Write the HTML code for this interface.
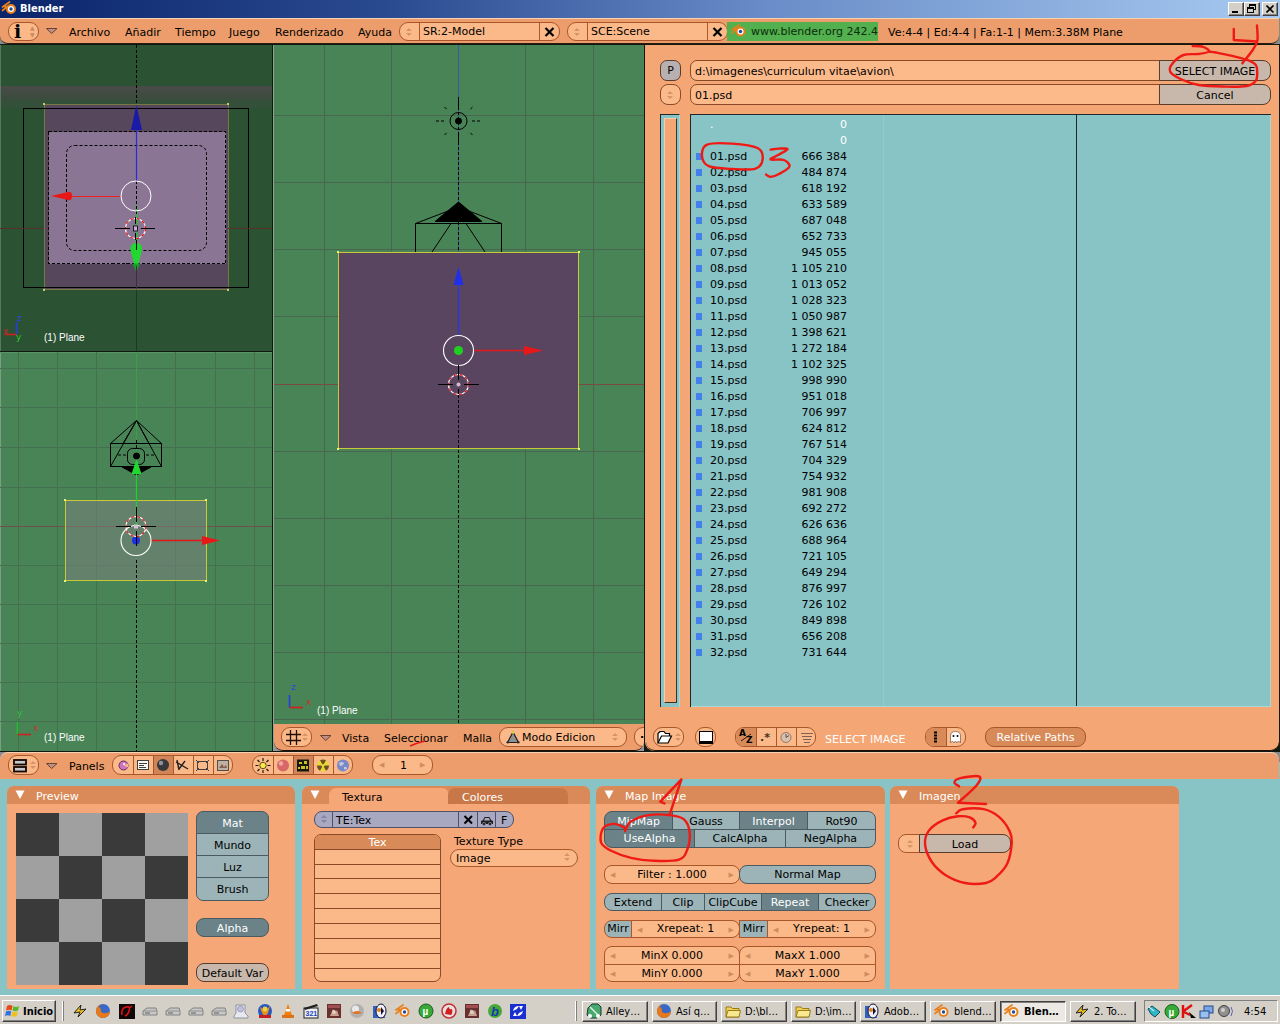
<!DOCTYPE html>
<html><head><meta charset="utf-8"><title>Blender</title>
<style>
*{box-sizing:border-box;margin:0;padding:0}
html,body{width:1280px;height:1024px;overflow:hidden;background:#88c3c6}
body{position:relative;font-family:"DejaVu Sans","Liberation Sans",sans-serif;font-size:11px;color:#000;line-height:13px}
.a{position:absolute}
.t{position:absolute;white-space:nowrap}
.w{color:#fff}
/* title bar */
#title{left:0;top:0;width:1280px;height:18px;background:linear-gradient(90deg,#0a246a 0%,#2a4a90 30%,#6a8cc8 60%,#a6caf0 100%)}
#title .t{left:20px;top:2px;color:#fff;font-weight:bold;font-size:11px;font-family:'DejaVu Sans Condensed','DejaVu Sans',sans-serif}
.wb{position:absolute;top:2px;width:16px;height:14px;background:#d4d0c8;border:1px solid;border-color:#fff #404040 #404040 #fff;box-shadow:inset -1px -1px 0 #808080}
/* header */
#hdr{left:0;top:18px;width:1279px;height:26px;background:#ec9d6b;border-top:1px solid #f8d0b4;border-bottom:1px solid #2a1a10;border-radius:0 0 8px 8px}
.pill{position:absolute;height:19px;border:1px solid #a8562a;border-radius:9px;background:#fbb888}
.sep{position:absolute;top:0;width:1px;height:17px;background:#a8562a}
.ud{color:#d89466;width:7px;height:9px;font-size:0;top:5px!important;margin-left:-1px}
.ud::before{content:"";position:absolute;left:0;top:0;border:3.5px solid transparent;border-top:0;border-bottom:3px solid currentColor}
.ud::after{content:"";position:absolute;left:0;top:5px;border:3.5px solid transparent;border-bottom:0;border-top:3px solid currentColor}
.x{font-size:15px;line-height:17px;font-weight:bold}
.vt{font-family:"Liberation Sans",sans-serif;font-size:10px}
/* viewports */
.vp{position:absolute;overflow:hidden}
/* file browser */
#fb{left:646px;top:45px;width:633px;height:706px;background:#f4a674;border-radius:0 0 9px 9px;border-bottom:1px solid #201008;box-shadow:-1px 0 0 #f4a674}
.fld{position:absolute;height:19px;background:#fcb98a;border:1px solid #8a4a28}
.gbtn{position:absolute;height:19px;background:#c8b8ac;border:1px solid #5a3c2c;text-align:center;line-height:17px}
.r{position:absolute;left:0;width:200px;height:16px;line-height:16px;white-space:pre;margin-top:-1px}
.r i{position:absolute;left:5px;top:4px;width:6px;height:7px;background:#4480ec}
.r .nm{position:absolute;left:19px;top:0}
.r .sz{position:absolute;right:44px;top:0}
/* buttons window */
#bh{left:0;top:752px;width:1279px;height:27px;background:#ec9d6b;border-top:1px solid #f8d0b4;border-radius:8px 8px 0 0}
.panel{position:absolute;background:#f5a777;border-radius:7px 7px 0 0}
.ph{position:absolute;left:0;top:0;right:0;height:18px;background:#da8a58;border-radius:7px 7px 0 0;color:#fff}
.b{position:absolute;height:17px;line-height:15px;text-align:center;border:1px solid #4a5a60;background:#9cb4b8;white-space:nowrap}
.b.on{background:#6a8288;color:#fff}
.n{position:absolute;height:17px;line-height:15px;text-align:center;border:1px solid #a8562a;background:#fbb888;white-space:nowrap}
.ar{font-size:7px;line-height:18px;top:0;color:#d08c60}
.panel .b,.panel .n,.panel .gbtn{padding-top:1px}
/* taskbar */
#tb{left:0;top:995px;width:1280px;height:29px;background:#d4d0c8;border-top:1px solid #fff}
.tk{position:absolute;top:5px;height:21px;border:1px solid;border-color:#fff #404040 #404040 #fff;box-shadow:inset -1px -1px 0 #808080;font-family:"DejaVu Sans Condensed","DejaVu Sans",sans-serif;font-size:11px;line-height:20px;padding-left:23px;white-space:nowrap;overflow:hidden}
</style></head><body>

<!-- TITLE BAR -->
<div id="title" class="a"><svg class="a" style="left:1px;top:0" width="17" height="16" viewBox="0 0 16 16"><path d="M1 7 L8 2 M1 10.500 L6 6.500 L2.500 6.500" stroke="#e8801c" stroke-width="1.700" fill="none" stroke-linecap="round"/><circle cx="9.500" cy="9" r="5" fill="#e8801c"/><circle cx="9.500" cy="9" r="3" fill="#fff"/><circle cx="9.500" cy="9" r="1.700" fill="#1c4c9c"/></svg><span class="t">Blender</span>
<div class="wb" style="left:1228px"><div class="a" style="left:3px;top:8px;width:6px;height:2px;background:#000"></div></div>
<div class="wb" style="left:1244px"><div class="a" style="left:4px;top:1px;width:7px;height:6px;border:1px solid #000;border-top-width:2px"></div><div class="a" style="left:2px;top:4px;width:7px;height:6px;border:1px solid #000;border-top-width:2px;background:#d4d0c8"></div></div>
<div class="wb" style="left:1262px"><svg class="a" style="left:3px;top:2px" width="9" height="8"><path d="M0.500 0.500 L7.500 7.500 M7.500 0.500 L0.500 7.500" stroke="#000" stroke-width="1.600"/></svg></div>
</div>

<!-- MAIN HEADER -->
<div class="a" style="left:0;top:18px;width:1280px;height:27px;background:#8a8a88"></div>
<div id="hdr" class="a">
<div class="pill" style="left:8px;top:3px;width:31px"><span class="t" style="left:5px;top:-1px;font-family:'DejaVu Serif','Liberation Serif',serif;font-weight:bold;font-size:19px;line-height:19px;top:-1px!important">i</span><span class="t" style="left:21px;top:1px;font-size:6px;line-height:7px;color:#c88a60">▲<br>▼</span></div>
<svg class="a" style="left:45px;top:8px" width="14" height="8"><path d="M1.5 1.5 L12 1.5 L6.7 6.5 Z" fill="#c09080" stroke="#6a4030" stroke-width="1"/></svg>
<span class="t" style="left:69px;top:7px">Archivo</span>
<span class="t" style="left:125px;top:7px">Añadir</span>
<span class="t" style="left:175px;top:7px">Tiempo</span>
<span class="t" style="left:229px;top:7px">Juego</span>
<span class="t" style="left:275px;top:7px">Renderizado</span>
<span class="t" style="left:358px;top:7px">Ayuda</span>
<div class="pill" style="left:399px;top:3px;width:161px"><span class="t ud" style="left:7px;top:2px"></span><div class="sep" style="left:19px"></div><span class="t" style="left:23px;top:2px">SR:2-Model</span><div class="sep" style="left:139px"></div><svg class="a" style="left:144px;top:4px" width="11" height="10"><path d="M1.500 1 L9.500 9 M9.500 1 L1.500 9" stroke="#000" stroke-width="2.200"/></svg></div>
<div class="pill" style="left:567px;top:3px;width:161px"><span class="t ud" style="left:7px;top:2px"></span><div class="sep" style="left:19px"></div><span class="t" style="left:23px;top:2px">SCE:Scene</span><div class="sep" style="left:139px"></div><svg class="a" style="left:144px;top:4px" width="11" height="10"><path d="M1.500 1 L9.500 9 M9.500 1 L1.500 9" stroke="#000" stroke-width="2.200"/></svg></div>
<div class="a" style="left:727px;top:3px;width:151px;height:19px;background:#52b04e"><span class="t" style="left:24px;top:3px;color:#0c2c0c">www.blender.org 242.4</span>
<svg class="a" style="left:4px;top:2px" width="16" height="14" viewBox="0 0 16 14"><path d="M1 6 L8 1 M1 9 L6 5 L3 5" stroke="#e8801c" stroke-width="1.6" fill="none" stroke-linecap="round"/><circle cx="9.5" cy="7.5" r="5" fill="#e8801c"/><circle cx="9.5" cy="7.5" r="3" fill="#fff"/><circle cx="9.5" cy="7.5" r="1.7" fill="#1c4c9c"/></svg></div>
<span class="t" style="left:888px;top:7px">Ve:4-4 | Ed:4-4 | Fa:1-1 | Mem:3.38M Plane</span>
</div>

<!-- VIEWPORTS -->
<div class="a" style="left:0;top:44px;width:1280px;height:708px;background:#101810"></div>
<div class="a" style="left:273px;top:45px;width:1px;height:706px;background:#88a890"></div>
<div class="vp" id="v1" style="left:0;top:45px;width:272px;height:306px;background:#2c5234">
<svg class="a" style="left:0;top:0" width="272" height="306" viewBox="0 45 272 306" shape-rendering="crispEdges">
<defs><linearGradient id="hz" x1="0" y1="0" x2="0" y2="1"><stop offset="0" stop-color="#4a4a48"/><stop offset="1" stop-color="#3a4c3c"/></linearGradient></defs>
<rect x="0" y="86" width="272" height="14" fill="url(#hz)"/>
<rect x="0" y="100" width="272" height="8" fill="#34503a"/>
<rect x="0" y="45" width="1" height="306" fill="#587860"/>
<line x1="0" y1="228.5" x2="272" y2="228.5" stroke="#4a3c30" stroke-width="1"/>
<line x1="136.5" y1="289" x2="136.5" y2="351" stroke="#1c3a22" stroke-width="1"/>
<!-- plane -->
<rect x="44" y="105" width="184" height="184" fill="#56475c"/>
<rect x="48.5" y="131.5" width="177" height="132" fill="#8b7595"/>
<rect x="44.5" y="104.5" width="184" height="185" fill="none" stroke="#767a40"/>
<rect x="43" y="103" width="2" height="2" fill="#c8c870"/><rect x="227" y="103" width="2" height="2" fill="#c8c870"/><rect x="43" y="289" width="2" height="2" fill="#c8c870"/><rect x="227" y="289" width="2" height="2" fill="#c8c870"/>
<!-- camera frame -->
<rect x="23.5" y="108.5" width="225" height="179" fill="none" stroke="#000"/>
<rect x="48.5" y="131.5" width="177" height="132" fill="none" stroke="#000" stroke-dasharray="3 2"/>
<rect x="66.5" y="145.5" width="140" height="105" rx="8" fill="none" stroke="#000" stroke-dasharray="3 2" shape-rendering="auto"/>
<line x1="136.5" y1="45" x2="136.5" y2="105" stroke="#000" stroke-dasharray="3 2"/>
<line x1="0" y1="228.5" x2="44" y2="228.5" stroke="#5a3028"/><line x1="228" y1="228.5" x2="272" y2="228.5" stroke="#5a3028"/>
<g shape-rendering="auto">
<!-- blue arrow -->
<line x1="136.5" y1="128" x2="136.5" y2="181" stroke="#2a2ad8" stroke-width="1.2"/>
<path d="M136.3 105 L131 130 L142 130 Z" fill="#1a1aa8"/>
<!-- red arrow -->
<line x1="70" y1="196.500" x2="121" y2="196.500" stroke="#f02020" stroke-width="1"/>
<path d="M51 196 L66 192.5 Q72 190 72 196 Q72 202 66 199.5 Z" fill="#e81818"/>
<!-- green arrow -->
<line x1="136.5" y1="205" x2="136.5" y2="246" stroke="#18c828" stroke-width="1.4"/>
<path d="M136.3 272 L130.5 250 Q130 243 136.3 243 Q142.5 243 142 250 Z" fill="#20d830"/>
<path d="M136.3 272 L132.5 263.5 L140 263.5 Z" fill="#18a028"/>
<path d="M136.500 181 V216" stroke="#000" stroke-dasharray="3 2"/><path d="M136.500 240 V250" stroke="#000"/><path d="M136.500 266 V289" stroke="#3a3040"/><circle cx="136" cy="196" r="15" fill="none" stroke="#fff" stroke-width="1"/>
<!-- cursor -->
<circle cx="135.5" cy="228.5" r="10" fill="none" stroke="#fff" stroke-width="1.2"/>
<circle cx="135.5" cy="228.5" r="10" fill="none" stroke="#e01818" stroke-width="1.2" stroke-dasharray="3 3"/>
<path d="M115 228.5 H130 M141 228.5 H155 M135.5 217 V224 M135.5 233 V240" stroke="#000" stroke-width="1"/>
<rect x="133.5" y="226" width="4" height="5" fill="#c8a8d8" stroke="#000" stroke-width="0.8"/>
<!-- axis icon -->
<path d="M16.5 334.5 V322" stroke="#2040e0" stroke-width="1.600"/><path d="M16.5 334.5 H5" stroke="#d02020" stroke-width="1.600"/>
</g>
</svg>
<span class="t" style="left:17px;top:269px;color:#2848e0;font-size:9px;line-height:9px">z</span>
<span class="t" style="left:3px;top:282px;color:#c82828;font-size:9px;line-height:9px">x</span>
<span class="t" style="left:16px;top:288px;color:#28c828;font-size:9px;line-height:9px">y</span>
<span class="t w vt" style="left:44px;top:286px">(1) Plane</span>
</div>
<div class="vp" id="v2" style="left:0;top:352px;width:272px;height:399px;background:#488456">
<svg class="a" style="left:0;top:0" width="272" height="399" viewBox="0 352 272 399" shape-rendering="crispEdges">
<rect x="0" y="352" width="1" height="399" fill="#78a084"/><rect x="0" y="352" width="272" height="1" fill="#5c9468"/>
<line x1="18.5" y1="352" x2="18.5" y2="751" stroke="#447050"/><line x1="57.5" y1="352" x2="57.5" y2="751" stroke="#447050"/><line x1="96.5" y1="352" x2="96.5" y2="751" stroke="#447050"/><line x1="175.5" y1="352" x2="175.5" y2="751" stroke="#447050"/><line x1="215.5" y1="352" x2="215.5" y2="751" stroke="#447050"/><line x1="254.5" y1="352" x2="254.5" y2="751" stroke="#447050"/><line x1="0" y1="368.5" x2="272" y2="368.5" stroke="#447050"/><line x1="0" y1="407.5" x2="272" y2="407.5" stroke="#447050"/><line x1="0" y1="447.5" x2="272" y2="447.5" stroke="#447050"/><line x1="0" y1="487.5" x2="272" y2="487.5" stroke="#447050"/><line x1="0" y1="565.5" x2="272" y2="565.5" stroke="#447050"/><line x1="0" y1="604.5" x2="272" y2="604.5" stroke="#447050"/><line x1="0" y1="643.5" x2="272" y2="643.5" stroke="#447050"/><line x1="0" y1="682.5" x2="272" y2="682.5" stroke="#447050"/><line x1="0" y1="721.5" x2="272" y2="721.5" stroke="#447050"/>
<line x1="0" y1="526.5" x2="272" y2="526.5" stroke="#70504a"/>
<line x1="136.5" y1="352" x2="136.5" y2="500" stroke="#38a048"/>
<rect x="65.5" y="500.5" width="141" height="80" fill="#808080" fill-opacity=".5" stroke="#c8c838"/>

<line x1="136.5" y1="560" x2="136.5" y2="751" stroke="#000" stroke-dasharray="3 2"/>
<rect x="64" y="499" width="2" height="2" fill="#f0f080"/><rect x="205" y="499" width="2" height="2" fill="#f0f080"/><rect x="64" y="580" width="2" height="2" fill="#f0f080"/><rect x="205" y="580" width="2" height="2" fill="#f0f080"/>
<g shape-rendering="auto" fill="none" stroke="#000" stroke-width="1">
<!-- camera -->
<rect x="110.5" y="443.5" width="51" height="23"/>
<path d="M110.5 443.5 L136.5 420.5 L161.5 443.5 M110.5 466.5 L136.5 420.5 L161.5 466.5 M123 443.5 L136.5 420.5 L149 443.5"/>
<path d="M118 455 H127 M146 455 H155 M136.5 440 V448" stroke-dasharray="3 2"/>
<rect x="127.5" y="448.5" width="17" height="16" rx="5"/>
<circle cx="136.5" cy="456" r="3" fill="#000"/>
<path d="M122 467 H151 L136.5 475 Z" fill="#000"/>
<!-- green arrow -->
<line x1="136.5" y1="473" x2="136.5" y2="525" stroke="#20d030" stroke-width="1.3"/>
<path d="M136.5 459 L131.5 474 L141.5 474 Z" fill="#20d830" stroke="none"/>
<!-- red arrow -->
<line x1="151" y1="540.5" x2="203" y2="540.5" stroke="#e01818" stroke-width="1.3"/>
<path d="M220 540.5 L202 536 L202 545 Z" fill="#e81818" stroke="none"/>
<circle cx="136" cy="540.5" r="15" stroke="#fff" stroke-width="1.1"/>
<circle cx="136" cy="540.5" r="4" fill="#2030e0" stroke="none"/>
<!-- cursor -->
<circle cx="136" cy="526.5" r="10" stroke="#fff" stroke-width="1.2"/>
<circle cx="136" cy="526.5" r="10" stroke="#e01818" stroke-width="1.2" stroke-dasharray="3 3"/>
<path d="M116 526.5 H131 M141 526.5 H156 M136.5 507 V522 M136.5 531 V546"/>
<rect x="134" y="524.5" width="4" height="4" fill="#d8c0d8" stroke="none"/>
<!-- axis -->
<path d="M17.5 734.5 V722" stroke="#20c030" stroke-width="1.600"/><path d="M17.5 734.5 H31" stroke="#d02020" stroke-width="1.600"/>
</g>
</svg>
<span class="t" style="left:17px;top:357px;color:#30c040;font-size:9px;line-height:9px">y</span>
<span class="t" style="left:33px;top:372px;color:#c83030;font-size:9px;line-height:9px">x</span>
<span class="t w vt" style="left:44px;top:379px">(1) Plane</span>
</div>
<div class="vp" id="v3" style="left:274px;top:45px;width:370px;height:679px;background:#488456">
<svg class="a" style="left:0;top:0" width="371" height="679" viewBox="274 45 371 679" shape-rendering="crispEdges">
<line x1="324.5" y1="45" x2="324.5" y2="724" stroke="#4a6650"/><line x1="391.5" y1="45" x2="391.5" y2="724" stroke="#4a6650"/><line x1="525.5" y1="45" x2="525.5" y2="724" stroke="#4a6650"/><line x1="593.5" y1="45" x2="593.5" y2="724" stroke="#4a6650"/><line x1="274" y1="115.5" x2="645" y2="115.5" stroke="#4a6650"/><line x1="274" y1="182.5" x2="645" y2="182.5" stroke="#4a6650"/><line x1="274" y1="249.5" x2="645" y2="249.5" stroke="#4a6650"/><line x1="274" y1="316.5" x2="645" y2="316.5" stroke="#4a6650"/><line x1="274" y1="451.5" x2="645" y2="451.5" stroke="#4a6650"/><line x1="274" y1="518.5" x2="645" y2="518.5" stroke="#4a6650"/><line x1="274" y1="585.5" x2="645" y2="585.5" stroke="#4a6650"/><line x1="274" y1="652.5" x2="645" y2="652.5" stroke="#4a6650"/><line x1="274" y1="719.5" x2="645" y2="719.5" stroke="#4a6650"/>
<line x1="274" y1="384.5" x2="645" y2="384.5" stroke="#7a4a44"/>
<line x1="458.5" y1="45" x2="458.5" y2="252" stroke="#3858a8"/>
<rect x="338.5" y="252.5" width="240" height="196" fill="#5a4560" stroke="#c8c838"/>
<rect x="337" y="251" width="2" height="2" fill="#f0f080"/><rect x="578" y="251" width="2" height="2" fill="#f0f080"/><rect x="337" y="448" width="2" height="2" fill="#f0f080"/><rect x="578" y="448" width="2" height="2" fill="#f0f080"/>
<line x1="458.5" y1="97" x2="458.5" y2="252" stroke="#000" stroke-dasharray="3 2"/>
<line x1="458.5" y1="395" x2="458.5" y2="724" stroke="#000" stroke-dasharray="3 2"/>
<g shape-rendering="auto" fill="none" stroke="#000" stroke-width="1">
<!-- lamp -->
<circle cx="458.5" cy="121" r="8.5"/><circle cx="458.5" cy="121" r="3" fill="#000"/>
<path d="M436 121 H445 M472 121 H481 M458.5 99 V107 M458.5 135 V143 M444.5 107 L448 110.5 M472.5 107 L469 110.5 M444.5 135 L448 131.5 M472.5 135 L469 131.5" stroke-dasharray="3 2"/>
<!-- camera -->
<path d="M458.5 202 L435 221.5 L482 221.5 Z" fill="#000"/>
<path d="M415.5 252 V223.5 L458.5 207 L501.5 223.5 V252 M415.5 223.5 H501.5 M451 223.5 L432 252 M466 223.5 L485 252"/>
<!-- blue arrow -->
<line x1="458.5" y1="283" x2="458.5" y2="335" stroke="#2838e8" stroke-width="1.3"/>
<path d="M458.5 267 L453.5 285 L463.5 285 Z" fill="#2030e8" stroke="none"/>
<!-- red arrow -->
<line x1="473.5" y1="350.5" x2="525" y2="350.5" stroke="#e01818" stroke-width="1.3"/>
<path d="M543 350.5 L524 346 L524 355 Z" fill="#e81818" stroke="none"/>
<circle cx="458.5" cy="350.5" r="15" stroke="#fff" stroke-width="1.1"/>
<circle cx="458.5" cy="350.5" r="4.5" fill="#20d020" stroke="none"/>
<!-- cursor -->
<circle cx="458.5" cy="384.5" r="10" stroke="#fff" stroke-width="1.2"/>
<circle cx="458.5" cy="384.5" r="10" stroke="#e01818" stroke-width="1.2" stroke-dasharray="3 3"/>
<path d="M438 384.5 H453 M464 384.5 H479 M458.5 365 V380 M458.5 389 V394"/>
<circle cx="458.5" cy="384.5" r="2.5" fill="#d8b0d8" stroke="#404040" stroke-width="0.8"/>
<!-- axis -->
<path d="M289.5 707.5 V695" stroke="#2040e0" stroke-width="1.600"/><path d="M289.5 707.5 H303" stroke="#d02020" stroke-width="1.600"/>
</g>
</svg>
<span class="t" style="left:17px;top:638px;color:#2848e0;font-size:9px;line-height:9px">z</span>
<span class="t" style="left:32px;top:653px;color:#c83030;font-size:9px;line-height:9px">x</span>
<span class="t w vt" style="left:43px;top:659px">(1) Plane</span>
</div>

<!-- V3 HEADER -->
<div class="a" style="left:274px;top:724px;width:370px;height:27px;background:#989898"></div>
<div class="a" id="v3h" style="left:274px;top:724px;width:370px;height:27px;background:#ec9d6b;border-bottom:1px solid #201008;border-radius:0 0 9px 9px;overflow:hidden">
<div class="pill" style="left:7px;top:3px;width:31px;height:20px"><svg class="a" style="left:4px;top:2px" width="16" height="15"><path d="M4.5 0 V15 M10.5 0 V15 M0 4.5 H15 M0 10.5 H15" stroke="#201008" stroke-width="1.3" fill="none"/></svg><span class="t ud" style="left:21px"></span></div>
<svg class="a" style="left:45px;top:10px" width="14" height="8"><path d="M1.5 1.5 L12 1.5 L6.7 6.5 Z" fill="#c09080" stroke="#6a4030" stroke-width="1"/></svg>
<span class="t" style="left:68px;top:8px">Vista</span>
<span class="t" style="left:110px;top:8px">Seleccionar</span>
<span class="t" style="left:189px;top:8px">Malla</span>
<div class="pill" style="left:225px;top:3px;width:128px;height:20px"><svg class="a" style="left:6px;top:3px" width="14" height="13"><path d="M7 1 L1.5 11.5 H12.5 Z" fill="#909090" stroke="#202020" stroke-width="1.2"/><circle cx="7" cy="1.5" r="1.3" fill="#e0e040"/><circle cx="1.8" cy="11.3" r="1.3" fill="#303030"/><circle cx="12.2" cy="11.3" r="1.3" fill="#303030"/></svg><span class="t" style="left:22px;top:3px">Modo Edicion</span><span class="t ud" style="left:113px"></span></div>
<div class="pill" style="left:360px;top:3px;width:40px;height:20px"><span class="t" style="left:5px;top:3px;font-weight:bold">·</span></div>
<svg class="a" style="left:134px;top:16px" width="20" height="8"><path d="M2 6 Q9 3 17 1" stroke="#e81818" stroke-width="1.5" fill="none"/></svg>
</div>

<!-- FILE BROWSER -->
<div id="fb" class="a">
<div class="gbtn" style="left:14px;top:15px;width:21px;height:21px;border-radius:7px;background:#b8b0b0;line-height:19px">P</div>
<div class="fld" style="left:44px;top:15px;width:470px;height:21px;border-radius:7px 0 0 7px"><span class="t" style="left:4px;top:4px">d:\imagenes\curriculum vitae\avion\</span></div>
<div class="gbtn" style="left:513px;top:15px;width:112px;height:21px;border-radius:0 8px 8px 0;line-height:22px">SELECT IMAGE</div>
<div class="fld" style="left:14px;top:39px;width:21px;height:21px;border-radius:8px"><span class="t ud" style="left:7px;top:6px!important"></span></div>
<div class="fld" style="left:44px;top:39px;width:470px;height:21px;border-radius:7px 0 0 7px"><span class="t" style="left:4px;top:4px">01.psd</span></div>
<div class="gbtn" style="left:513px;top:39px;width:112px;height:21px;border-radius:0 8px 8px 0;line-height:22px">Cancel</div>
<!-- scrollbar -->
<div class="a" style="left:14px;top:69px;width:20px;height:593px;background:#88c3c6;border-left:1px solid #202828;border-top:1px solid #202828;border-right:1px solid #a8d8d8"></div>
<div class="a" style="left:18px;top:73px;width:13px;height:585px;background:#f4a674;border:1px solid;border-color:#f8ccb0 #403020 #403020 #f8ccb0"></div>
<!-- list -->
<div id="fl" class="a" style="left:44px;top:69px;width:581px;height:593px;background:#88c3c6;border-left:1px solid #202828;border-top:1px solid #202828;overflow:hidden">
<div class="a" style="left:192px;top:0;width:1px;height:593px;background:#94cacc"></div>
<div class="a" style="left:385px;top:0;width:1px;height:593px;background:#202828"></div><div class="a" style="left:0;top:591px;width:581px;height:1px;background:#a8d8d8"></div><div class="a" style="left:579px;top:0;width:1px;height:593px;background:#a8d8d8"></div>
<div class="r" style="top:3px"><span class="nm w">.</span><span class="sz w">0</span></div>
<div class="r" style="top:19px"><span class="nm w"> </span><span class="sz w">0</span></div>
<div class="r" style="top:35px"><i></i><span class="nm">01.psd</span><span class="sz">666 384</span></div>
<div class="r" style="top:51px"><i></i><span class="nm">02.psd</span><span class="sz">484 874</span></div>
<div class="r" style="top:67px"><i></i><span class="nm">03.psd</span><span class="sz">618 192</span></div>
<div class="r" style="top:83px"><i></i><span class="nm">04.psd</span><span class="sz">633 589</span></div>
<div class="r" style="top:99px"><i></i><span class="nm">05.psd</span><span class="sz">687 048</span></div>
<div class="r" style="top:115px"><i></i><span class="nm">06.psd</span><span class="sz">652 733</span></div>
<div class="r" style="top:131px"><i></i><span class="nm">07.psd</span><span class="sz">945 055</span></div>
<div class="r" style="top:147px"><i></i><span class="nm">08.psd</span><span class="sz">1 105 210</span></div>
<div class="r" style="top:163px"><i></i><span class="nm">09.psd</span><span class="sz">1 013 052</span></div>
<div class="r" style="top:179px"><i></i><span class="nm">10.psd</span><span class="sz">1 028 323</span></div>
<div class="r" style="top:195px"><i></i><span class="nm">11.psd</span><span class="sz">1 050 987</span></div>
<div class="r" style="top:211px"><i></i><span class="nm">12.psd</span><span class="sz">1 398 621</span></div>
<div class="r" style="top:227px"><i></i><span class="nm">13.psd</span><span class="sz">1 272 184</span></div>
<div class="r" style="top:243px"><i></i><span class="nm">14.psd</span><span class="sz">1 102 325</span></div>
<div class="r" style="top:259px"><i></i><span class="nm">15.psd</span><span class="sz">998 990</span></div>
<div class="r" style="top:275px"><i></i><span class="nm">16.psd</span><span class="sz">951 018</span></div>
<div class="r" style="top:291px"><i></i><span class="nm">17.psd</span><span class="sz">706 997</span></div>
<div class="r" style="top:307px"><i></i><span class="nm">18.psd</span><span class="sz">624 812</span></div>
<div class="r" style="top:323px"><i></i><span class="nm">19.psd</span><span class="sz">767 514</span></div>
<div class="r" style="top:339px"><i></i><span class="nm">20.psd</span><span class="sz">704 329</span></div>
<div class="r" style="top:355px"><i></i><span class="nm">21.psd</span><span class="sz">754 932</span></div>
<div class="r" style="top:371px"><i></i><span class="nm">22.psd</span><span class="sz">981 908</span></div>
<div class="r" style="top:387px"><i></i><span class="nm">23.psd</span><span class="sz">692 272</span></div>
<div class="r" style="top:403px"><i></i><span class="nm">24.psd</span><span class="sz">626 636</span></div>
<div class="r" style="top:419px"><i></i><span class="nm">25.psd</span><span class="sz">688 964</span></div>
<div class="r" style="top:435px"><i></i><span class="nm">26.psd</span><span class="sz">721 105</span></div>
<div class="r" style="top:451px"><i></i><span class="nm">27.psd</span><span class="sz">649 294</span></div>
<div class="r" style="top:467px"><i></i><span class="nm">28.psd</span><span class="sz">876 997</span></div>
<div class="r" style="top:483px"><i></i><span class="nm">29.psd</span><span class="sz">726 102</span></div>
<div class="r" style="top:499px"><i></i><span class="nm">30.psd</span><span class="sz">849 898</span></div>
<div class="r" style="top:515px"><i></i><span class="nm">31.psd</span><span class="sz">656 208</span></div>
<div class="r" style="top:531px"><i></i><span class="nm">32.psd</span><span class="sz">731 644</span></div>
</div>
<!-- bottom bar -->
<div class="pill" style="left:7px;top:682px;width:31px;height:20px"><svg class="a" style="left:2px;top:1px" width="17" height="17" viewBox="0 0 17 17"><path d="M2 13.500 V4.500 L4 2.500 H8 L9.500 4.500 H13.500 V7" fill="#fff" stroke="#000" stroke-width="1.200"/><path d="M2 14 L5.500 7 H15.500 L12 14 Z" fill="#fff" stroke="#000" stroke-width="1.200"/></svg><span class="t ud" style="left:22px"></span></div>
<div class="pill" style="left:49px;top:682px;width:21px;height:20px"><div class="a" style="left:3px;top:3px;width:14px;height:13px;background:#fff;border:1px solid #000;border-bottom-width:3px"></div></div>
<div class="pill" style="left:89px;top:682px;width:81px;height:20px;overflow:hidden"><div class="a" style="left:0;top:0;width:20px;height:18px;background:#d88a58"></div><div class="sep" style="left:20px;height:18px"></div><div class="sep" style="left:40px;height:18px"></div><div class="sep" style="left:60px;height:18px"></div><span class="t" style="left:3px;top:0;font-size:9px;font-weight:bold;line-height:10px">A</span><span class="t" style="left:10px;top:7px;font-size:9px;font-weight:bold;line-height:10px">Z</span><svg class="a" style="left:0;top:0" width="81" height="18"><path d="M5 13 L15 6" stroke="#000" stroke-width=".8"/><circle cx="50" cy="9.500" r="5" fill="#d8c0b0" stroke="#907868"/><path d="M50 6 V9.500 L53 7.500" stroke="#605048" fill="none"/><path d="M65 5.500 H77 M66 8.500 H76 M67 11.500 H75 M68 14.500 H74" stroke="#806050"/></svg><span class="t" style="left:24px;top:3px;font-weight:bold;color:#403020">.*</span></div>
<span class="t w" style="left:179px;top:688px">SELECT IMAGE</span>
<div class="pill" style="left:279px;top:682px;width:41px;height:20px;overflow:hidden"><div class="a" style="left:0;top:0;width:20px;height:18px;background:#d88a58"></div><div class="sep" style="left:20px;height:18px"></div><svg class="a" style="left:0;top:0" width="41" height="18"><path d="M8 4.500 H11 M8 7.500 H11 M8 10.500 H11 M8 13.500 H11" stroke="#000" stroke-width="2"/><path d="M24.500 15 V8 Q24.500 3.500 29.500 3.500 Q34.500 3.500 34.500 8 V15 L32.500 13 L31 15 L29.500 13 L28 15 L26.500 13 Z" fill="#fff" stroke="#806858" stroke-width=".8"/><circle cx="27.500" cy="8" r="1" fill="#000"/><circle cx="31.500" cy="8" r="1" fill="#000"/></svg></div>
<div class="pill" style="left:339px;top:682px;width:101px;height:20px;background:#d88a58;text-align:center;line-height:20px;color:#fff">Relative Paths</div>
</div>

<!-- BUTTONS HEADER -->
<div class="a" style="left:0;top:752px;width:1280px;height:10px;background:#8a8a88"></div>
<div id="bh" class="a">
<div class="pill" style="left:8px;top:2px;width:31px;height:20px"><svg class="a" style="left:4px;top:2px" width="15" height="15"><rect x="1" y="2" width="12" height="4.500" fill="#c8c8c8" stroke="#100804" stroke-width="1.800"/><rect x="1" y="9" width="12" height="4.500" fill="#c8c8c8" stroke="#100804" stroke-width="1.800"/></svg><span class="t ud" style="left:22px"></span></div>
<svg class="a" style="left:45px;top:9px" width="14" height="8"><path d="M1.5 1.5 L12 1.5 L6.7 6.5 Z" fill="#c09080" stroke="#6a4030" stroke-width="1"/></svg>
<span class="t" style="left:69px;top:7px">Panels</span>
<div class="pill" style="left:112px;top:2px;width:121px;height:20px;overflow:hidden"><div class="a" style="left:40px;top:0;width:20px;height:18px;background:#d08458"></div><div class="sep" style="left:20px;height:18px"></div><div class="sep" style="left:40px;height:18px"></div><div class="sep" style="left:60px;height:18px"></div><div class="sep" style="left:80px;height:18px"></div><div class="sep" style="left:100px;height:18px"></div>
<svg class="a" style="left:0;top:0" width="121" height="18"><circle cx="10.5" cy="9.5" r="4.5" fill="#d070c0" stroke="#603060"/><path d="M10.5 9.5 L15 7.5 V11.5 Z" fill="#fbb888"/><circle cx="11" cy="8" r="1" fill="#fff"/>
<rect x="24.5" y="4.500" width="11" height="9" fill="#f8f8f0" stroke="#404040"/><path d="M26 7.5 H34 M26 9.500 H31 M26 11.500 H33" stroke="#404040"/>
<circle cx="50" cy="9" r="6" fill="#383838"/><circle cx="48" cy="7" r="2.2" fill="#9090a0"/>
<path d="M64 4 L66 14 M63 6 L75 13 M66 13 L72 5" stroke="#202020" stroke-width="1.4" fill="none"/>
<path d="M84.500 5.500 H94.500 V13.500 H84.500 Z" fill="none" stroke="#404040"/><path d="M83 4 L86 7 M96 4 L93 7 M83 15 L86 12 M96 15 L93 12" stroke="#404040"/>
<rect x="104.500" y="4.500" width="11" height="10" fill="#c0b0a0" stroke="#505050"/><path d="M106 12 L109 8 L111 11 L113 9 L114 12 Z" fill="#806050"/></svg></div>
<div class="pill" style="left:252px;top:2px;width:101px;height:20px;overflow:hidden"><div class="a" style="left:40px;top:0;width:20px;height:18px;background:#d08458"></div><div class="sep" style="left:20px;height:18px"></div><div class="sep" style="left:40px;height:18px"></div><div class="sep" style="left:60px;height:18px"></div><div class="sep" style="left:80px;height:18px"></div>
<svg class="a" style="left:0;top:0" width="101" height="18"><circle cx="10" cy="9.5" r="3.2" fill="#f8e850" stroke="#605010"/><path d="M10 2 V5 M10 14 V17 M2.500 9.500 H5.500 M14.500 9.500 H17.500 M4.500 4 L6.500 6 M15.500 4 L13.500 6 M4.500 15 L6.500 13 M15.500 15 L13.500 13" stroke="#201808" stroke-width="1.2"/>
<circle cx="30" cy="9.500" r="6" fill="#d86868"/><circle cx="28" cy="7.500" r="2.200" fill="#f0a8a0"/>
<rect x="44" y="3.500" width="12" height="12" fill="#181808"/><path d="M46 6 h3 v2 h-3 Z M51 5 h3 v3 h-3 Z M48 10 h4 v3 h-4 Z M45 11 h2 v2 h-2 Z M53 10 h2 v3 h-2 Z" fill="#c8c020"/>
<circle cx="70" cy="9.500" r="6" fill="#e8d838"/><path d="M70 9.500 L67 4.300 A6 6 0 0 1 73 4.300 Z M70 9.500 L76 9.500 A6 6 0 0 1 73 14.700 Z M70 9.500 L67 14.700 A6 6 0 0 1 64 9.500 Z" fill="#705020"/><circle cx="70" cy="9.500" r="1.500" fill="#e8d838"/>
<circle cx="90" cy="9.500" r="6" fill="#7888c8"/><path d="M86 7 Q89 5 91 7 Q90 10 87 10 Z M91 11 Q94 10 94 13 Q92 14 91 13 Z" fill="#c8c8d8"/></svg></div>
<div class="pill" style="left:372px;top:2px;width:61px;height:20px"><span class="t" style="left:27px;top:3px">1</span><span class="t ar" style="left:6px">◀</span><span class="t ar" style="left:47px">▶</span></div>
</div>

<!-- PANELS -->
<div class="panel" style="left:7px;top:786px;width:288px;height:203px"><div class="ph"><svg class="a" style="left:8px;top:4px" width="11" height="10"><path d="M0.500 0.500 H9.500 L5 9 Z" fill="#fff"/></svg><span class="t" style="left:29px;top:4px">Preview</span></div>
<div class="a" style="left:9px;top:27px;width:172px;height:172px;background:#a0a0a0"><div class="a" style="left:0px;top:0px;width:43px;height:43px;background:#3a3a3a"></div><div class="a" style="left:86px;top:0px;width:43px;height:43px;background:#3a3a3a"></div><div class="a" style="left:43px;top:43px;width:43px;height:43px;background:#3a3a3a"></div><div class="a" style="left:129px;top:43px;width:43px;height:43px;background:#3a3a3a"></div><div class="a" style="left:0px;top:86px;width:43px;height:43px;background:#3a3a3a"></div><div class="a" style="left:86px;top:86px;width:43px;height:43px;background:#3a3a3a"></div><div class="a" style="left:43px;top:129px;width:43px;height:43px;background:#3a3a3a"></div><div class="a" style="left:129px;top:129px;width:43px;height:43px;background:#3a3a3a"></div></div>
<div class="b on" style="left:189px;top:25px;width:73px;height:23px;line-height:21px;border-radius:7px 7px 0 0">Mat</div>
<div class="b" style="left:189px;top:47px;width:73px;height:23px;line-height:21px">Mundo</div>
<div class="b" style="left:189px;top:69px;width:73px;height:23px;line-height:21px">Luz</div>
<div class="b" style="left:189px;top:91px;width:73px;height:24px;line-height:22px;border-radius:0 0 7px 7px">Brush</div>
<div class="b on" style="left:189px;top:132px;width:73px;height:19px;line-height:17px;border-radius:8px">Alpha</div>
<div class="gbtn" style="left:189px;top:177px;width:73px;height:19px;line-height:17px;border-radius:8px">Default Var</div>
</div>

<div class="panel" style="left:302px;top:786px;width:288px;height:203px"><div class="ph"><svg class="a" style="left:8px;top:4px" width="11" height="10"><path d="M0.500 0.500 H9.500 L5 9 Z" fill="#fff"/></svg>
<div class="a" style="left:27px;top:2px;width:120px;height:16px;background:#f5a777;border-radius:7px 7px 0 0"></div>
<div class="a" style="left:146px;top:2px;width:120px;height:16px;background:#c87848;border-radius:7px 7px 0 0"></div>
<span class="t" style="left:40px;top:5px;color:#000">Textura</span><span class="t" style="left:160px;top:5px">Colores</span></div>
<div class="n" style="left:12px;top:25px;width:200px;height:17px;padding-top:0;border-radius:8px;background:#a8a8c0;border-color:#505068;overflow:hidden"><span class="t ud" style="left:7px;top:3px!important;color:#8484a4"></span><div class="sep" style="left:17px;background:#505068"></div><span class="t" style="left:21px;top:1px">TE:Tex</span><div class="sep" style="left:143px;background:#505068"></div><svg class="a" style="left:148px;top:3px" width="11" height="10"><path d="M1.500 1 L9 8.500 M9 1 L1.500 8.500" stroke="#000" stroke-width="2"/></svg><div class="sep" style="left:162px;background:#505068"></div><div class="sep" style="left:180px;background:#505068"></div><span class="t" style="left:186px;top:1px">F</span>
<svg class="a" style="left:165px;top:2px" width="14" height="12"><path d="M1 7 L3 6 L4.500 3 H9.500 L11 6 L13 7 V10 H1 Z" fill="#202020"/><path d="M5 4 H9 L10 6.500 H4 Z" fill="#a8a8c0"/><circle cx="4" cy="10" r="1.600" fill="#202020" stroke="#a8a8c0" stroke-width=".6"/><circle cx="10" cy="10" r="1.600" fill="#202020" stroke="#a8a8c0" stroke-width=".6"/></svg></div>
<div class="a" id="tl" style="left:12px;top:48px;width:127px;height:148px;border:1px solid #8a4a28;border-radius:7px;background:#fbb888;overflow:hidden">
<div class="a" style="left:0;top:0;width:125px;height:14px;background:#d88a58;color:#fff;text-align:center;line-height:15px">Tex</div>
<div class="a" style="left:0;top:14px;width:125px;height:1px;background:#8a4a28"></div><div class="a" style="left:0;top:29px;width:125px;height:1px;background:#8a4a28"></div><div class="a" style="left:0;top:43px;width:125px;height:1px;background:#8a4a28"></div><div class="a" style="left:0;top:58px;width:125px;height:1px;background:#8a4a28"></div><div class="a" style="left:0;top:73px;width:125px;height:1px;background:#8a4a28"></div><div class="a" style="left:0;top:88px;width:125px;height:1px;background:#8a4a28"></div><div class="a" style="left:0;top:103px;width:125px;height:1px;background:#8a4a28"></div><div class="a" style="left:0;top:118px;width:125px;height:1px;background:#8a4a28"></div><div class="a" style="left:0;top:133px;width:125px;height:1px;background:#8a4a28"></div>
</div>
<span class="t" style="left:152px;top:49px">Texture Type</span>
<div class="pill" style="left:148px;top:63px;width:128px;height:18px"><span class="t" style="left:5px;top:2px">Image</span><span class="t ud" style="left:114px;top:3px!important"></span></div>
</div>

<div class="panel" style="left:596px;top:786px;width:289px;height:203px"><div class="ph"><svg class="a" style="left:8px;top:4px" width="11" height="10"><path d="M0.500 0.500 H9.500 L5 9 Z" fill="#fff"/></svg><span class="t" style="left:29px;top:4px">Map Image</span></div>
<div class="b on" style="left:8px;top:25px;width:69px;height:19px;line-height:17px;border-radius:8px 0 0 0">MipMap</div>
<div class="b" style="left:76px;top:25px;width:68px;height:19px;line-height:17px">Gauss</div>
<div class="b on" style="left:143px;top:25px;width:69px;height:19px;line-height:17px">Interpol</div>
<div class="b" style="left:211px;top:25px;width:69px;height:19px;line-height:17px;border-radius:0 8px 0 0">Rot90</div>
<div class="b on" style="left:8px;top:43px;padding-top:0;width:91px;height:19px;line-height:17px;border-radius:0 0 0 8px">UseAlpha</div>
<div class="b" style="left:98px;top:43px;padding-top:0;width:92px;height:19px;line-height:17px">CalcAlpha</div>
<div class="b" style="left:189px;top:43px;padding-top:0;width:91px;height:19px;line-height:17px;border-radius:0 0 8px 0">NegAlpha</div>
<div class="n" style="left:8px;top:79px;padding-top:0;width:136px;height:19px;line-height:17px;border-radius:8px">Filter : 1.000<span class="t ar" style="left:5px">◀</span><span class="t ar" style="right:5px">▶</span></div>
<div class="b" style="left:143px;top:79px;padding-top:0;width:137px;height:19px;line-height:17px;border-radius:8px">Normal Map</div>
<div class="b" style="left:8px;top:107px;width:58px;height:18px;line-height:16px;border-radius:8px 0 0 8px">Extend</div>
<div class="b" style="left:65px;top:107px;width:44px;height:18px;line-height:16px">Clip</div>
<div class="b" style="left:108px;top:107px;width:58px;height:18px;line-height:16px">ClipCube</div>
<div class="b on" style="left:165px;top:107px;width:58px;height:18px;line-height:16px">Repeat</div>
<div class="b" style="left:222px;top:107px;width:58px;height:18px;line-height:16px;border-radius:0 8px 8px 0">Checker</div>
<div class="b" style="left:8px;top:134px;padding-top:0;width:28px;height:18px;line-height:16px;border-radius:8px 0 0 8px;border-color:#a8562a">Mirr</div>
<div class="n" style="left:35px;top:134px;padding-top:0;width:109px;height:18px;line-height:16px;border-radius:0 8px 8px 0">Xrepeat: 1<span class="t ar" style="left:5px">◀</span><span class="t ar" style="right:5px">▶</span></div>
<div class="b" style="left:143px;top:134px;padding-top:0;width:29px;height:18px;line-height:16px;border-color:#a8562a">Mirr</div>
<div class="n" style="left:171px;top:134px;padding-top:0;width:109px;height:18px;line-height:16px;border-radius:0 8px 8px 0">Yrepeat: 1<span class="t ar" style="left:5px">◀</span><span class="t ar" style="right:5px">▶</span></div>
<div class="n" style="left:8px;top:160px;padding-top:0;width:136px;height:19px;line-height:17px;border-radius:8px 8px 0 0">MinX 0.000<span class="t ar" style="left:5px">◀</span><span class="t ar" style="right:5px">▶</span></div>
<div class="n" style="left:143px;top:160px;padding-top:0;width:137px;height:19px;line-height:17px;border-radius:8px 8px 0 0">MaxX 1.000<span class="t ar" style="left:5px">◀</span><span class="t ar" style="right:5px">▶</span></div>
<div class="n" style="left:8px;top:178px;width:136px;height:18px;line-height:16px;border-radius:0 0 8px 8px">MinY 0.000<span class="t ar" style="left:5px">◀</span><span class="t ar" style="right:5px">▶</span></div>
<div class="n" style="left:143px;top:178px;width:137px;height:18px;line-height:16px;border-radius:0 0 8px 8px">MaxY 1.000<span class="t ar" style="left:5px">◀</span><span class="t ar" style="right:5px">▶</span></div>
</div>

<div class="panel" style="left:890px;top:786px;width:289px;height:203px"><div class="ph"><svg class="a" style="left:8px;top:4px" width="11" height="10"><path d="M0.500 0.500 H9.500 L5 9 Z" fill="#fff"/></svg><span class="t" style="left:29px;top:4px">Imagen</span></div>
<div class="n" style="left:8px;top:48px;width:22px;height:19px;border-radius:8px 0 0 8px"><span class="t ud" style="left:9px;top:5px!important"></span></div>
<div class="gbtn" style="left:29px;top:48px;width:92px;height:19px;line-height:17px;border-radius:0 8px 8px 0">Load</div>
</div>

<!-- TASKBAR -->
<div id="tb" class="a">
<div class="tk" style="left:2px;top:4px;width:54px;height:22px;line-height:21px;padding-left:20px;font-weight:bold;color:#000"><svg class="a" style="left:2px;top:2px" width="16" height="16" viewBox="0 0 16 16"><path d="M2 3 Q5 1 7.500 3 L6.500 7.500 Q4 6 1 7.500 Z" fill="#e84818"/><path d="M8.500 3 Q11 5 14 3 L13 7.500 Q10 9 7.500 7.500 Z" fill="#58b828"/><path d="M1 8.500 Q4 7 6.300 8.500 L5.300 13 Q3 11.500 0 13 Z" fill="#3070e0"/><path d="M7.300 8.500 Q10 10 12.800 8.500 L11.800 13 Q9 14.500 6.300 13 Z" fill="#f0c018"/></svg>Inicio</div>
<div class="a" style="left:62px;top:5px;width:2px;height:20px;border-left:1px solid #fff;border-right:1px solid #808080"></div>
<svg class="a" style="left:72px;top:7px" width="16" height="16" viewBox="0 0 16 16"><path d="M2 10 L9 2 L8 7 L14 6 L6 14 L8 9 Z" fill="#f0c020" stroke="#202020" stroke-width="1"/></svg><svg class="a" style="left:95px;top:7px" width="16" height="16" viewBox="0 0 16 16"><circle cx="8" cy="8" r="7" fill="#3868c8"/><path d="M8 1 A7 7 0 1 0 15 8 Q12 11 8 10 Q5 9 6 6 Q4 5 4 3 Q6 1 8 1 Z" fill="#e87818"/></svg><svg class="a" style="left:119px;top:7px" width="16" height="16" viewBox="0 0 16 16"><rect x="0" y="1" width="16" height="15" fill="#100808"/><path d="M3 12 Q2 5 7 4 Q12 3 10 8 Q9 12 6 13 M10 5 L13 3" stroke="#e81010" stroke-width="1.500" fill="none"/></svg><svg class="a" style="left:142px;top:7px" width="16" height="16" viewBox="0 0 16 16"><path d="M1 8 L5 5 H14 L15 8 V12 H1 Z" fill="#c8c8c8" stroke="#707070" stroke-width=".8"/><path d="M1 8 H15" stroke="#909090"/><rect x="3" y="9.500" width="5" height="1" fill="#606060"/></svg><svg class="a" style="left:165px;top:7px" width="16" height="16" viewBox="0 0 16 16"><path d="M1 8 L5 5 H14 L15 8 V12 H1 Z" fill="#c8c8c8" stroke="#707070" stroke-width=".8"/><path d="M1 8 H15" stroke="#909090"/><rect x="3" y="9.500" width="5" height="1" fill="#606060"/></svg><svg class="a" style="left:188px;top:7px" width="16" height="16" viewBox="0 0 16 16"><path d="M1 8 L5 5 H14 L15 8 V12 H1 Z" fill="#c8c8c8" stroke="#707070" stroke-width=".8"/><path d="M1 8 H15" stroke="#909090"/><rect x="3" y="9.500" width="5" height="1" fill="#606060"/></svg><svg class="a" style="left:211px;top:7px" width="16" height="16" viewBox="0 0 16 16"><path d="M1 8 L5 5 H14 L15 8 V12 H1 Z" fill="#c8c8c8" stroke="#707070" stroke-width=".8"/><path d="M1 8 H15" stroke="#909090"/><rect x="3" y="9.500" width="5" height="1" fill="#606060"/></svg><svg class="a" style="left:233px;top:7px" width="16" height="16" viewBox="0 0 16 16"><path d="M3 10 V2 H12 V10 L15 13 V15 H1 V13 Z" fill="#e8e8f0" stroke="#808090" stroke-width=".8"/><circle cx="7.500" cy="6" r="3" fill="#c0c0e0" stroke="#8080a0" stroke-width=".6"/></svg><svg class="a" style="left:257px;top:7px" width="16" height="16" viewBox="0 0 16 16"><circle cx="8" cy="8" r="7" fill="#2858c0"/><path d="M3 4 L8 8 L13 3 L11 10 L8 14 L5 10 Z" fill="#e89020"/><circle cx="8" cy="6" r="2.500" fill="#f0d040"/><rect x="2" y="12" width="12" height="3" fill="#c02020"/></svg><svg class="a" style="left:280px;top:7px" width="16" height="16" viewBox="0 0 16 16"><path d="M8 1 L12 12 H4 Z" fill="#f08010"/><path d="M6.300 6 H9.700 L10.500 8.500 H5.500 Z" fill="#fff"/><rect x="2" y="12" width="12" height="3" fill="#e07010"/></svg><svg class="a" style="left:303px;top:7px" width="16" height="16" viewBox="0 0 16 16"><rect x="1" y="5" width="14" height="10" fill="#f0f0f0" stroke="#202020"/><path d="M1 5 L14 1 L15 3 L2 7 Z" fill="#202020"/><text x="2.500" y="13" font-size="7" font-family="Liberation Sans, sans-serif" font-weight="bold" fill="#2040c0">321</text></svg><svg class="a" style="left:326px;top:7px" width="16" height="16" viewBox="0 0 16 16"><rect x="1" y="1" width="14" height="14" fill="#6a3030"/><rect x="2" y="2" width="12" height="3" fill="#a05050"/><path d="M4 13 L7 6 L9 10 L11 7 L13 13 Z" fill="#c8a090"/><circle cx="8" cy="9" r="2" fill="#e0d0c0"/></svg><svg class="a" style="left:349px;top:7px" width="16" height="16" viewBox="0 0 16 16"><circle cx="8" cy="8" r="7" fill="#b0b0b0"/><circle cx="6.500" cy="6" r="3.500" fill="#e8e8e8"/><path d="M3 10 Q8 6 13 10 Q8 12 3 10 Z" fill="#e87020"/></svg><svg class="a" style="left:372px;top:7px" width="16" height="16" viewBox="0 0 16 16"><rect x="1" y="3" width="12" height="12" fill="#3060c0"/><ellipse cx="9" cy="8" rx="5" ry="7" fill="#f0f0f8" stroke="#101030"/><path d="M9 4 L12 8 L9 12 Z" fill="#101030"/><circle cx="7" cy="7" r="2" fill="#e08020"/></svg><svg class="a" style="left:395px;top:7px" width="16" height="16" viewBox="0 0 16 16"><path d="M1 7 L8 2 M1 10.500 L6 6.500 L2.500 6.500" stroke="#e8801c" stroke-width="1.700" fill="none" stroke-linecap="round"/><circle cx="9.500" cy="9" r="5" fill="#e8801c"/><circle cx="9.500" cy="9" r="3" fill="#fff"/><circle cx="9.500" cy="9" r="1.700" fill="#1c4c9c"/></svg><svg class="a" style="left:418px;top:7px" width="16" height="16" viewBox="0 0 16 16"><circle cx="8" cy="8" r="7" fill="#38a838" stroke="#186018"/><text x="4.500" y="12" font-size="10" font-family="Liberation Sans, sans-serif" font-weight="bold" fill="#fff">µ</text></svg><svg class="a" style="left:441px;top:7px" width="16" height="16" viewBox="0 0 16 16"><circle cx="8" cy="8" r="7" fill="#e8e0e0" stroke="#c03030" stroke-width="1.500"/><path d="M4 11 Q5 5 8 4 Q8 7 11 6 Q12 10 10 12 Z" fill="#d02020"/></svg><svg class="a" style="left:464px;top:7px" width="16" height="16" viewBox="0 0 16 16"><rect x="1" y="1" width="14" height="14" fill="#6a3030"/><rect x="2" y="2" width="12" height="3" fill="#a05050"/><path d="M4 13 L7 6 L9 10 L11 7 L13 13 Z" fill="#c8a090"/><circle cx="8" cy="9" r="2" fill="#e0d0c0"/></svg><svg class="a" style="left:487px;top:7px" width="16" height="16" viewBox="0 0 16 16"><circle cx="8" cy="8" r="7" fill="#48a838"/><text x="4" y="13" font-size="13" font-family="Liberation Sans, sans-serif" font-weight="bold" font-style="italic" fill="#1838b0">b</text></svg><svg class="a" style="left:510px;top:7px" width="16" height="16" viewBox="0 0 16 16"><rect x="0" y="1" width="16" height="15" fill="#1830d0"/><path d="M3 8 Q4 3 9 3 L7 6 Z M13 8 Q12 13 7 13 L9 10 Z M9 3 L13 3 L11 7 Z M7 13 L3 13 L5 9 Z" fill="#fff"/></svg>
<div class="a" style="left:575px;top:5px;width:2px;height:20px;border-left:1px solid #fff;border-right:1px solid #808080"></div>
<div class="tk" style="left:582px;width:66px;"><svg class="a" style="left:3px;top:1px" width="16" height="16" viewBox="0 0 16 16"><path d="M2 5 L6 1 H12 L15 4 V12 L11 15 H4 L1 12 Z" fill="#48a870" stroke="#183828"/><path d="M4 4 L12 12" stroke="#e0f0e0" stroke-width="1.500"/><circle cx="4" cy="13" r="2" fill="#fff"/><circle cx="12" cy="13" r="2" fill="#fff"/></svg>Alley…</div>
<div class="tk" style="left:652px;width:65px;"><svg class="a" style="left:3px;top:1px" width="16" height="16" viewBox="0 0 16 16"><circle cx="8" cy="8" r="7" fill="#3868c8"/><path d="M8 1 A7 7 0 1 0 15 8 Q12 11 8 10 Q5 9 6 6 Q4 5 4 3 Q6 1 8 1 Z" fill="#e87818"/></svg>Así q…</div>
<div class="tk" style="left:721px;width:66px;"><svg class="a" style="left:3px;top:1px" width="16" height="16" viewBox="0 0 16 16"><path d="M1 4 H6 L7.500 5.500 H14 V14 H1 Z" fill="#f0d050" stroke="#907010" stroke-width=".9"/><path d="M1 14 L3 7.500 H15.500 L14 14 Z" fill="#f8e890" stroke="#907010" stroke-width=".9"/></svg>D:\bl…</div>
<div class="tk" style="left:791px;width:65px;"><svg class="a" style="left:3px;top:1px" width="16" height="16" viewBox="0 0 16 16"><path d="M1 4 H6 L7.500 5.500 H14 V14 H1 Z" fill="#f0d050" stroke="#907010" stroke-width=".9"/><path d="M1 14 L3 7.500 H15.500 L14 14 Z" fill="#f8e890" stroke="#907010" stroke-width=".9"/></svg>D:\im…</div>
<div class="tk" style="left:860px;width:66px;"><svg class="a" style="left:3px;top:1px" width="16" height="16" viewBox="0 0 16 16"><rect x="1" y="3" width="12" height="12" fill="#3060c0"/><ellipse cx="9" cy="8" rx="5" ry="7" fill="#f0f0f8" stroke="#101030"/><path d="M9 4 L12 8 L9 12 Z" fill="#101030"/><circle cx="7" cy="7" r="2" fill="#e08020"/></svg>Adob…</div>
<div class="tk" style="left:930px;width:66px;"><svg class="a" style="left:3px;top:1px" width="16" height="16" viewBox="0 0 16 16"><path d="M1 7 L8 2 M1 10.500 L6 6.500 L2.500 6.500" stroke="#e8801c" stroke-width="1.700" fill="none" stroke-linecap="round"/><circle cx="9.500" cy="9" r="5" fill="#e8801c"/><circle cx="9.500" cy="9" r="3" fill="#fff"/><circle cx="9.500" cy="9" r="1.700" fill="#1c4c9c"/></svg>blend…</div>
<div class="tk" style="left:1000px;width:66px;font-weight:bold;border-color:#404040 #fff #fff #404040;box-shadow:inset 1px 1px 0 #808080;background:#ece9e4"><svg class="a" style="left:3px;top:1px" width="16" height="16" viewBox="0 0 16 16"><path d="M1 7 L8 2 M1 10.500 L6 6.500 L2.500 6.500" stroke="#e8801c" stroke-width="1.700" fill="none" stroke-linecap="round"/><circle cx="9.500" cy="9" r="5" fill="#e8801c"/><circle cx="9.500" cy="9" r="3" fill="#fff"/><circle cx="9.500" cy="9" r="1.700" fill="#1c4c9c"/></svg>Blen…</div>
<div class="tk" style="left:1070px;width:66px;"><svg class="a" style="left:3px;top:1px" width="16" height="16" viewBox="0 0 16 16"><path d="M2 10 L9 2 L8 7 L14 6 L6 14 L8 9 Z" fill="#f0c020" stroke="#202020" stroke-width="1"/></svg>2. To…</div>
<div class="a" style="left:1144px;top:4px;width:134px;height:22px;border:1px solid;border-color:#808080 #fff #fff #808080"></div>
<svg class="a" style="left:1146px;top:7px" width="92" height="17" viewBox="0 0 92 17"><path d="M2 6 L6 3 L14 9 L9 14 L5 11 Z" fill="#30b8c8" stroke="#104858"/><path d="M3 4 L8 8" stroke="#fff"/>
<circle cx="26" cy="8.500" r="7" fill="#38a838" stroke="#186018"/><text x="22.500" y="12.500" font-size="10" font-family="Liberation Sans, sans-serif" font-weight="bold" fill="#fff">µ</text>
<path d="M37 2 V15 M37 8.500 L46 2 M37 8.500 L44 12" stroke="#e01010" stroke-width="2.500" fill="none"/><path d="M43 9 L50 15 L45 15 Z" fill="#000"/>
<rect x="58" y="3" width="9" height="7" fill="#78a8e8" stroke="#284888"/><rect x="54" y="8" width="9" height="7" fill="#98c0f0" stroke="#284888"/>
<circle cx="78" cy="8" r="5.500" fill="#909090" stroke="#404040"/><circle cx="77" cy="7" r="2" fill="#d0d0d0"/><path d="M85 4 Q88 8 85 13" stroke="#6060c0" fill="none"/></svg>
<span class="t" style="left:1244px;top:9px;font-family:'DejaVu Sans Condensed','DejaVu Sans',sans-serif">4:54</span>
</div>

<!-- ANNOTATIONS -->
<svg class="a" style="left:0;top:0;z-index:50;pointer-events:none" width="1280" height="1024" viewBox="0 0 1280 1024" fill="none" stroke="#f01a14" stroke-width="2.400" stroke-linecap="round" stroke-linejoin="round">
<path d="M1233.8 29 L1233.8 40 L1257 41.5"/>
<path d="M1257.0 25.5 C1257.0 28.1 1258.2 36.7 1257.3 41.0 C1256.4 45.3 1254.1 47.8 1251.6 51.5 C1249.1 55.2 1243.9 61.2 1242.4 63.2"/>
<path d="M1192.7 46.0 C1194.4 46.1 1200.3 45.9 1203.0 46.8 C1205.7 47.7 1209.7 50.3 1209.0 51.5 C1208.3 52.7 1203.0 53.4 1198.8 54.0 C1194.5 54.6 1187.9 53.4 1183.5 55.0 C1179.1 56.6 1174.5 60.9 1172.3 63.7 C1170.1 66.5 1168.9 69.4 1170.3 71.9 C1171.7 74.5 1175.8 76.8 1180.5 79.0 C1185.2 81.2 1191.2 83.7 1198.8 85.0 C1206.4 86.3 1218.2 86.4 1226.2 86.6 C1234.2 86.8 1241.6 86.9 1246.5 86.0 C1251.4 85.1 1253.8 83.2 1255.6 81.0 C1257.4 78.8 1257.2 75.6 1257.2 72.9 C1257.2 70.2 1257.4 67.0 1255.6 64.8 C1253.8 62.6 1250.6 61.2 1246.5 59.7 C1242.4 58.2 1236.3 56.8 1231.2 55.6 C1226.1 54.4 1219.7 53.2 1216.0 52.5 C1212.3 51.8 1210.2 51.7 1209.0 51.5"/>
<path d="M702.0 156.0 C701.7 152.4 702.2 146.7 707.2 144.6 C712.2 142.5 723.8 143.0 732.2 143.6 C740.6 144.2 752.4 145.5 757.5 148.0 C762.6 150.5 763.0 155.2 762.7 158.6 C762.4 162.0 760.7 166.9 755.6 168.6 C750.5 170.3 740.0 169.4 732.2 169.0 C724.4 168.6 713.8 168.4 708.8 166.2 C703.8 164.0 702.3 159.6 702.0 156.0"/>
<path d="M770.6 149.6 C772.0 149.4 776.2 148.7 779.0 148.6 C781.8 148.5 787.7 148.1 787.5 149.2 C787.3 150.3 780.8 153.3 778.0 155.0 C775.2 156.7 769.6 158.7 770.6 159.5 C771.6 160.3 780.7 158.8 783.8 160.0 C786.9 161.2 790.2 164.3 789.4 166.6 C788.6 168.9 782.1 172.3 779.0 174.0 C775.9 175.7 772.8 176.8 770.6 176.9 C768.4 177.0 766.8 174.9 766.0 174.5"/>
<path d="M664.4 803.4 L660.3 801.6 L681.4 779.4 L669.7 814.5"/>
<path d="M625.1 831.0 C624.9 830.4 626.0 828.6 624.0 827.4 C622.0 826.2 616.9 823.7 613.4 823.9 C609.9 824.1 604.9 825.5 602.9 828.6 C600.9 831.7 599.7 838.9 601.1 842.6 C602.5 846.3 606.1 848.2 611.1 850.8 C616.1 853.3 623.8 856.2 631.0 857.9 C638.2 859.6 646.4 860.5 654.4 860.8 C662.4 861.1 673.5 861.5 679.0 859.6 C684.5 857.8 685.4 854.3 687.2 849.7 C689.0 845.1 690.2 837.2 689.6 832.1 C689.0 827.0 687.0 822.0 683.7 819.2 C680.4 816.4 675.6 815.8 669.7 815.1 C663.9 814.4 655.1 814.0 648.6 815.1 C642.1 816.2 634.9 818.9 631.0 821.5 C627.1 824.1 626.1 829.4 625.1 831.0"/>
<path d="M959.1 786.4 C958.3 785.7 954.2 783.7 954.4 782.3 C954.6 780.9 956.2 779.2 960.3 778.2 C964.4 777.2 976.3 775.2 979.0 776.4 C981.7 777.6 980.2 780.8 976.7 785.2 C973.2 789.6 961.0 799.9 957.9 802.8 L986.1 804"/>
<path d="M956.2 813.3 C957.3 812.6 958.0 809.9 962.6 809.2 C967.2 808.5 977.6 807.9 983.7 809.2 C989.8 810.5 994.7 813.3 999.0 816.9 C1003.3 820.5 1007.4 826.6 1009.5 830.9 C1011.6 835.2 1012.2 837.1 1011.8 842.6 C1011.4 848.1 1009.9 857.8 1007.2 863.7 C1004.5 869.6 998.9 874.6 995.4 877.8 C991.9 881.0 991.2 882.1 986.1 883.0 C981.0 883.9 971.6 884.3 965.0 883.0 C958.4 881.7 951.7 878.8 946.2 875.4 C940.7 872.0 935.7 867.6 932.2 862.5 C928.7 857.4 925.7 850.3 925.1 845.0 C924.5 839.7 925.8 835.0 928.7 830.9 C931.6 826.8 937.8 822.8 942.7 820.4 C947.6 818.0 953.4 816.8 957.9 816.3 C962.4 815.8 966.8 816.3 969.7 817.4 C972.6 818.5 974.9 821.0 975.5 822.7 C976.1 824.4 973.6 826.6 973.2 827.4"/>
</svg>
</body></html>
